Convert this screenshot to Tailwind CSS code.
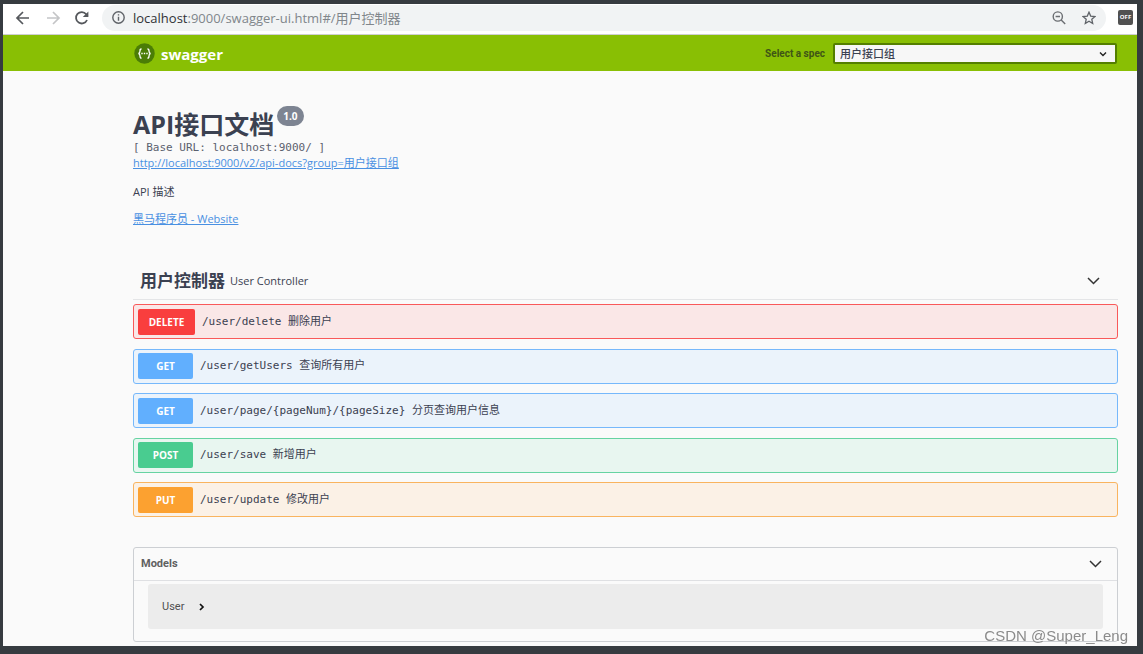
<!DOCTYPE html>
<html lang="zh-CN">
<head>
<meta charset="utf-8">
<title>Swagger UI</title>
<script src="https://cdn.jsdelivr.net/npm/@tailwindcss/browser@4"></script>
</head>
<body class="min-h-screen flex flex-col bg-[#363b40] pt-1 pl-[3px] pr-1.5 pb-2 font-['Open_Sans','Noto_Sans_CJK_SC',sans-serif] text-[11px] leading-4 text-[#3b4151]">
<div class="h-[31px] shrink-0 flex items-center bg-white border-b border-[#cfcfd2] pl-3 pr-1 pb-[3px] text-[#5f6368]">
  <button aria-label="Back" class="w-[30px]"><svg class="block size-4" viewBox="0 0 16 16" fill="none" stroke="#55585c" stroke-width="1.7"><path d="M14 8H2.5M8 2L2 8l6 6"/></svg></button>
  <button aria-label="Forward" class="w-[29px]"><svg class="block size-4" viewBox="0 0 16 16" fill="none" stroke="#c4c5c7" stroke-width="1.7"><path d="M2 8h11.5M8 2l6 6-6 6"/></svg></button>
  <button aria-label="Reload" class="w-7"><svg class="block size-4" viewBox="0 0 16 16" fill="none" stroke="#55585c" stroke-width="1.8"><path d="M13 10A5.7 5.7 0 1 1 12.2 4.2L13.5 6"/><path d="M14.4 1.5v5.6H8.8z" fill="#55585c" stroke="none"/></svg></button>
  <div class="h-[26px] flex-1 flex items-center rounded-full bg-[#f1f3f4] pl-2.5 pr-2.5">
    <svg class="size-[13px] shrink-0" viewBox="0 0 13 13" fill="none" stroke="#5f6368" stroke-width="1.4"><circle cx="6.5" cy="6.5" r="5.7"/><path d="M6.5 5.8v4M6.5 3.2v1.4"/></svg>
    <div class="flex-1 pl-2 text-[13px] leading-5 text-[#80868b] whitespace-nowrap"><span class="text-[#303236]">localhost</span>:9000/swagger-ui.html#/用户控制器</div>
    <button aria-label="Zoom" class="w-[30px]"><svg class="block size-3.5" viewBox="0 0 14 14" fill="none" stroke="#6b6e72" stroke-width="1.4"><circle cx="5.8" cy="5.5" r="4.6"/><path d="M9.200 9l4 4M3.600 5.500h4.400"/></svg></button>
    <button aria-label="Bookmark"><svg class="block size-3.5" viewBox="0 0 14 14" fill="none" stroke="#5f6368" stroke-width="1.3"><path d="M7 1.200l1.700 3.900 4.300.4-3.200 2.800.9 4.200L7 10.300l-3.700 2.200.9-4.200L1 5.500l4.300-.4z"/></svg></button>
  </div>
  <button aria-label="Extension off" class="ml-3 size-[15px] rounded-xs bg-[#515151] text-white text-[6px] leading-[15px] font-bold">OFF</button>
</div>
<header class="h-9 shrink-0 flex items-center justify-between bg-[#89bf04] pl-[131px] pr-5 pt-px">
  <a href="#" class="flex items-center gap-1.5 text-white text-[15px] font-bold leading-5">
    <svg class="size-[21px]" viewBox="0 0 21 21"><circle cx="10.5" cy="10.5" r="10.2" fill="#4b7d06"/><g fill="none" stroke="#fff" stroke-width="1.3"><path d="M7.6 5.8C6 5.8 6 6.6 6 8s0 2.3-1.6 2.5C6 10.7 6 11.6 6 13s0 2.2 1.6 2.2M13.4 5.8C15 5.8 15 6.6 15 8s0 2.3 1.6 2.500C15 10.700 15 11.600 15 13s0 2.200-1.600 2.200"/><path d="M7.300 10.500h1.400M9.800 10.500h1.400M12.300 10.500h1.400"/></g></svg>
    <span>swagger</span></a>
  <div class="flex items-center gap-2">
    <label for="spec" class="font-[Roboto] font-bold text-[10px] text-[#3f5516]">Select a spec</label>
    <div class="relative">
      <select id="spec" class="block appearance-none w-[284px] h-[21px] rounded-xs border-2 border-[#547f00] bg-[#f7f7f7] pl-[5px] text-[11px] leading-4 font-medium text-[#3b4151]"><option>用户接口组</option></select>
      <svg class="absolute right-2.5 top-[7px] size-2 pointer-events-none" viewBox="0 0 8 8" fill="none" stroke="#222" stroke-width="1.400"><path d="M1 2.500l3 3 3-3"/></svg>
    </div>
  </div>
</header>
<main class="flex-1 bg-[#fafafa] pl-[130px] pr-[19px] pb-[3px]">
  <section class="pt-[37px]">
    <h1 class="flex items-start gap-[3px] text-[25px] leading-8 font-bold"><span>API接口文档</span><small class="-mt-0.5 rounded-full bg-[#7d8492] px-1.5 py-0.5 text-[10px] leading-4 text-white">1.0</small></h1>
    <p class="mt-px font-['DejaVu_Sans_Mono',monospace] text-[#5a606e] leading-[14px]">[ Base URL: localhost:9000/ ]</p>
    <a href="#" class="block w-fit leading-[15px] text-[#4990e2] underline">http://localhost:9000/v2/api-docs?group=用户接口组</a>
    <p class="mt-3.5">API 描述</p>
    <a href="#" class="mt-[11px] block w-fit text-[#4990e2] underline">黑马程序员 - Website</a>
  </section>
  <section class="mt-9">
    <h2 class="h-[37px] flex items-center border-b border-[#e4e5e7] pl-[7px] pr-[18px]">
      <span class="text-[17px] leading-6 font-bold">用户控制器</span><small class="ml-[5px] flex-1 text-[11px]">User Controller</small>
      <button aria-label="Collapse"><svg class="block w-[13px] h-2" viewBox="0 0 13 8" fill="none" stroke="#333" stroke-width="1.500"><path d="M1 1l5.500 5.500L12 1"/></svg></button>
    </h2>
    <div class="mt-1 h-[213px] flex flex-col justify-between font-['DejaVu_Sans_Mono','Noto_Sans_CJK_SC',monospace]">
      <div class="h-[35px] flex items-center rounded-[3px] border border-[#f9595a] bg-[#fae7e7] px-1"><button class="h-[26px] w-[57px] mr-[7px] rounded-xs bg-[#f93e3e] font-['Open_Sans'] text-[10px] font-bold text-white">DELETE</button><a href="#">/user/delete 删除用户</a></div>
      <div class="h-[35px] flex items-center rounded-[3px] border border-[#76b8fb] bg-[#ebf3fb] px-1"><button class="h-[26px] w-[55px] mr-[7px] rounded-xs bg-[#61affe] font-['Open_Sans'] text-[10px] font-bold text-white">GET</button><a href="#">/user/getUsers 查询所有用户</a></div>
      <div class="h-[35px] flex items-center rounded-[3px] border border-[#76b8fb] bg-[#ebf3fb] px-1"><button class="h-[26px] w-[55px] mr-[7px] rounded-xs bg-[#61affe] font-['Open_Sans'] text-[10px] font-bold text-white">GET</button><a href="#">/user/page/{pageNum}/{pageSize} 分页查询用户信息</a></div>
      <div class="h-[35px] flex items-center rounded-[3px] border border-[#66d3a2] bg-[#e8f6f0] px-1"><button class="h-[26px] w-[55px] mr-[7px] rounded-xs bg-[#49cc90] font-['Open_Sans'] text-[10px] font-bold text-white">POST</button><a href="#">/user/save 新增用户</a></div>
      <div class="h-[35px] flex items-center rounded-[3px] border border-[#f9b45f] bg-[#fbf1e6] px-1"><button class="h-[26px] w-[55px] mr-[7px] rounded-xs bg-[#fca130] font-['Open_Sans'] text-[10px] font-bold text-white">PUT</button><a href="#">/user/update 修改用户</a></div>
    </div>
  </section>
  <section class="mt-[30px] rounded-[3px] border border-[#cccfd3] pb-3">
    <h2 class="h-[33px] flex items-center justify-between border-b border-[#dfe0e3] pl-[7px] pr-[15px] font-[Roboto] text-[11px] font-bold text-[#606060]">Models
      <button aria-label="Collapse models"><svg class="block w-[13px] h-2" viewBox="0 0 13 8" fill="none" stroke="#333" stroke-width="1.500"><path d="M1 1l5.500 5.500L12 1"/></svg></button></h2>
    <div class="mt-[3px] mx-3.5 h-[45px] flex items-center gap-3.5 rounded-[3px] bg-[#ececec] px-3.5 font-[Roboto] text-[11px] text-[#505050]">User
      <button aria-label="Expand User"><svg class="block size-2" viewBox="0 0 8 8" fill="none" stroke="#111" stroke-width="1.700"><path d="M2 1l3 3-3 3"/></svg></button></div>
  </section>
</main>
<div class="fixed right-[15px] bottom-2 font-['Liberation_Sans'] text-[15px] leading-5 text-[#8b8b8b]">CSDN @Super_Leng</div>
</body>
</html>
